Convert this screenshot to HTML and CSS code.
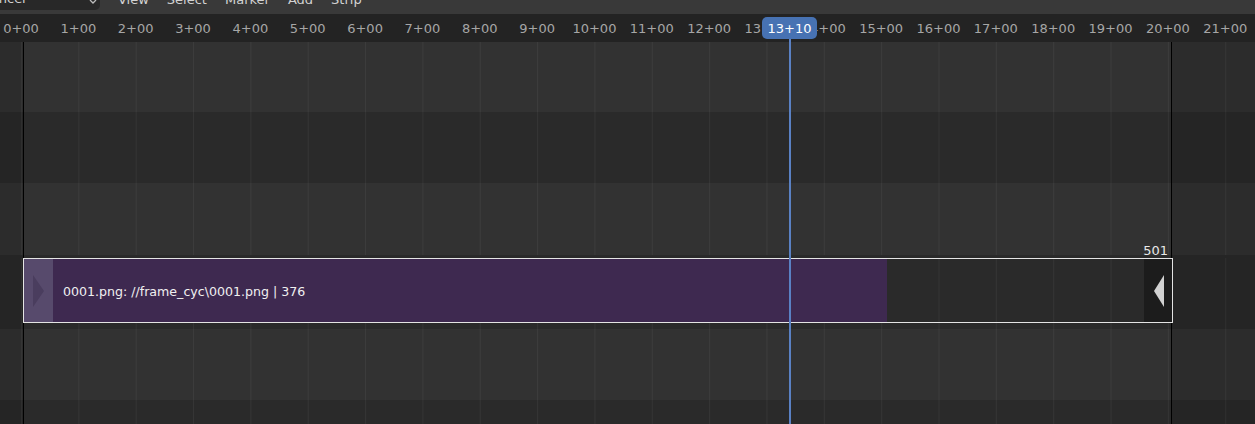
FILE: index.html
```html
<!DOCTYPE html>
<html>
<head>
	<meta charset="utf-8">
	<title>Sequencer</title>
	<link rel="stylesheet" href="styles.css">
</head>
<body>
	<div class="sequencer">
		<header class="topbar">
			<div class="editor-type">
				<span>Sequencer</span>
				<svg class="chevron" width="8" height="8" viewBox="0 0 8 8"><path d="M1 1 L4 4 L7 1" fill="none" stroke="#bdbdbd" stroke-width="1.3"/></svg>
			</div>
			<nav class="menu">
				<span>View</span>
				<span>Select</span>
				<span>Marker</span>
				<span>Add</span>
				<span>Strip</span>
			</nav>
		</header>

		<div class="ruler">
			<span>0+00</span><span>1+00</span><span>2+00</span><span>3+00</span>
			<span>4+00</span><span>5+00</span><span>6+00</span><span>7+00</span>
			<span>8+00</span><span>9+00</span><span>10+00</span><span>11+00</span>
			<span>12+00</span><span>13+00</span><span>14+00</span><span>15+00</span>
			<span>16+00</span><span>17+00</span><span>18+00</span><span>19+00</span>
			<span>20+00</span><span>21+00</span>
			<div class="playhead-label">13+10</div>
		</div>

		<div class="timeline">
			<div class="channel light first"></div>
			<div class="channel dark"></div>
			<div class="channel light"></div>
			<div class="channel dark">
				<div class="strip">
					<div class="handle left"><i></i></div>
					<div class="strip-body">0001.png: //frame_cyc\0001.png | 376</div>
					<div class="strip-tail"></div>
					<div class="handle right"><i></i></div>
					<span class="end-frame">501</span>
				</div>
			</div>
			<div class="channel light"></div>
			<div class="channel dark last"></div>

			<div class="outside before"></div>
			<div class="outside after"></div>
			<div class="frame-line start"></div>
			<div class="frame-line end"></div>
			<div class="playhead"></div>
		</div>
	</div>
</body>
</html>
```

FILE: styles.css
```css
/* base */
body {
	margin: 0;
	background-color: #2a2a2a;
	font-family: "DejaVu Sans", sans-serif;
	overflow: hidden;
}

.sequencer {
	width: 1255px;
	height: 424px;
	overflow: hidden;
}

/* header */
.topbar {
	height: 14px;
	display: flex;
	align-items: flex-start;
	overflow: hidden;
	background-color: #393939;
	font-size: 13px;
	color: #d2d2d2;
}

.editor-type {
	flex: none;
	width: 150px;
	height: 10px;
	margin-left: -50px;
	padding: 0 3px 0 8px;
	box-sizing: border-box;
	display: flex;
	justify-content: space-between;
	align-items: flex-start;
	overflow: hidden;
	background-color: #282828;
	border-radius: 0 0 5px 0;
}

.editor-type span {
	line-height: 14px;
	margin-top: -8px;
}

.chevron {
	margin-top: -1px;
}

.menu {
	display: flex;
	gap: 18px;
	margin-left: 18px;
}

.menu span {
	line-height: 14px;
	margin-top: -7px;
}

/* ruler */
.ruler {
	position: relative;
	height: 28px;
	display: flex;
	overflow: hidden;
	background-color: #232323;
	font-size: 13px;
	color: #a6a6a6;
}

.ruler span {
	flex: none;
	width: 57.35px;
	text-align: center;
	line-height: 30px;
	white-space: nowrap;
}

.ruler span:first-child {
	margin-left: -7.675px;
}

.playhead-label {
	position: absolute;
	left: 762px;
	top: 3px;
	width: 55px;
	height: 22px;
	line-height: 24px;
	text-align: center;
	color: #fff;
	background-color: #4772b3;
	border-radius: 5px;
	z-index: 2;
}

/* channels */
.timeline {
	position: relative;
	height: 382px;
}

.channel {
	height: 71px;
	background-image: linear-gradient(to right, rgba(255, 255, 255, 0.05) 1px, transparent 1px);
	background-size: 57.35px 100%;
	background-position: 21px 0;
}

.channel.light {
	background-color: #323232;
}

.channel.dark {
	background-color: #2a2a2a;
}

.channel.first {
	height: 70px;
}

.channel.first + .channel + .channel {
	height: 72px;
}

.channel.last {
	height: 27px;
}

/* strip */
.strip {
	position: relative;
	z-index: 1;
	display: flex;
	width: 1150px;
	height: 65px;
	margin: 3px 0 0 23px;
	box-sizing: border-box;
	border: 1px solid #e4e4e4;
}

.handle {
	flex: none;
	width: 29px;
	display: flex;
	align-items: center;
}

.handle.left {
	background-color: #574a6c;
	padding-left: 9px;
	box-sizing: border-box;
}

.handle.left i {
	border-left: 11px solid #4a3d5e;
	border-top: 16.5px solid transparent;
	border-bottom: 16.5px solid transparent;
}

.handle.right {
	width: 28px;
	background-color: #1c1c1c;
	padding-left: 10px;
	box-sizing: border-box;
}

.handle.right i {
	border-right: 10px solid #d2d2d2;
	border-top: 16px solid transparent;
	border-bottom: 16px solid transparent;
}

.strip-body {
	flex: none;
	width: 834px;
	display: flex;
	align-items: center;
	padding: 2px 0 0 10px;
	box-sizing: border-box;
	background-color: #3e2950;
	font-size: 12.6px;
	color: #f0f0f0;
	white-space: nowrap;
}

.strip-tail {
	flex: 1;
}

.end-frame {
	position: absolute;
	right: 4px;
	bottom: calc(100% + 1px);
	font-size: 13px;
	color: #e8e8e8;
}

/* frame range and playhead */
.outside {
	position: absolute;
	top: 0;
	bottom: 0;
	background-color: rgba(0, 0, 0, 0.1);
}

.outside.before {
	left: 0;
	width: 23px;
}

.outside.after {
	left: 1172px;
	right: 0;
}

.frame-line {
	position: absolute;
	top: 0;
	bottom: 0;
	width: 1px;
	background-color: #000;
}

.frame-line.start {
	left: 23px;
}

.frame-line.end {
	left: 1171px;
}

.playhead {
	position: absolute;
	top: -3px;
	bottom: 0;
	left: 789px;
	width: 2px;
	background-color: #5a81c4;
	z-index: 2;
}
```
